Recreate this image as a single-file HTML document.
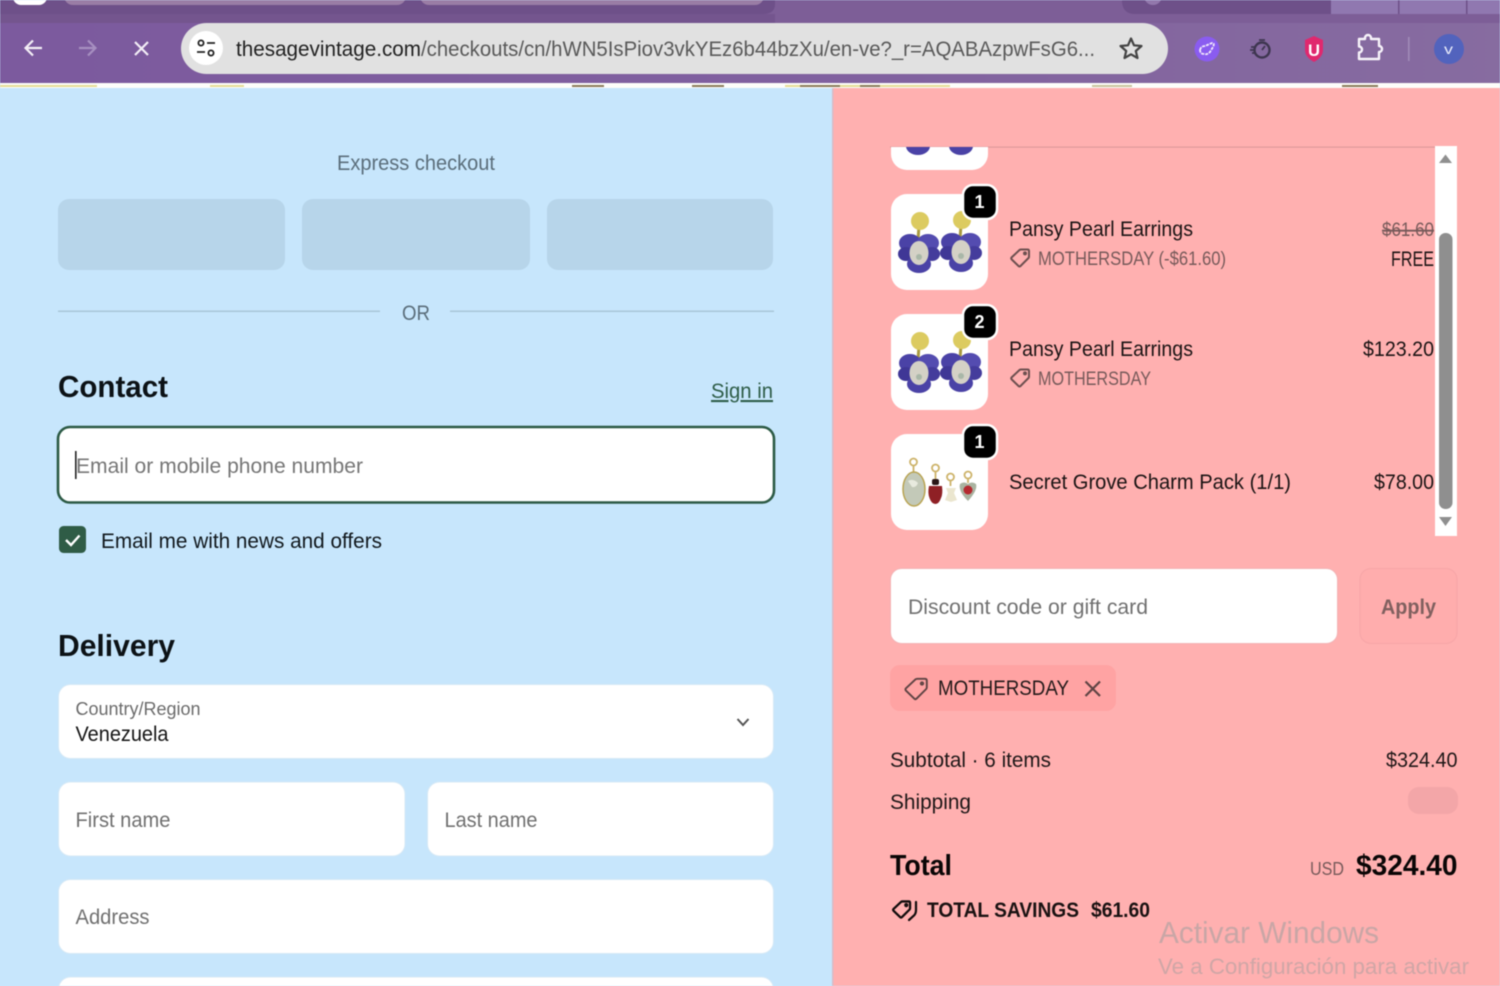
<!DOCTYPE html>
<html><head><meta charset="utf-8"><title>Checkout</title>
<style>
html,body{margin:0;padding:0;width:1500px;height:986px;overflow:hidden;background:#c7e6fc}
svg{display:block;filter:blur(.4px)}
text{font-family:"Liberation Sans",sans-serif;white-space:pre}
</style></head><body>
<svg width="1500" height="986" viewBox="0 0 1500 986" xmlns="http://www.w3.org/2000/svg">
<defs>
<linearGradient id="tb" x1="0" x2="1" y1="0" y2="0"><stop offset="0" stop-color="#7c5a9e"/><stop offset="0.5" stop-color="#80609f"/><stop offset="1" stop-color="#876ca0"/></linearGradient>
<g id="flower">
<path d="M0 -26L-1 -12" stroke="#a99a40" stroke-width="3"/>
<circle cx="1" cy="-31" r="9" fill="#dccb60"/>
<ellipse cx="-9" cy="-9" rx="11" ry="9" fill="#4a42a6"/><ellipse cx="9" cy="-9" rx="11" ry="9" fill="#544cb0"/>
<ellipse cx="-13" cy="2" rx="8" ry="7" fill="#3f3796"/><ellipse cx="13" cy="2" rx="8" ry="7" fill="#443c9c"/>
<ellipse cx="0" cy="12" rx="12" ry="9" fill="#4a42a6"/>
<ellipse cx="0" cy="1" rx="9.500" ry="12" fill="#d4d1c6"/>
<circle cx="0" cy="5" r="3" fill="#a9b7a8"/>
</g>
<g id="tag" fill="none" stroke-linejoin="round" stroke-linecap="round">
<path d="M1.500 9.500Q0.800 10.500 1.800 11.500L8.500 18Q9.500 19 10.500 18L18.500 10Q19 9.500 19 8.500V3Q19 1.500 17.500 1.500H11Q10.200 1.500 9.500 2Z"/><circle cx="15" cy="5.400" r="1"/>
</g>
<clipPath id="topclip"><rect x="880" y="147" width="120" height="30"/></clipPath>
</defs>

<!-- browser chrome -->
<rect x="0" y="0" width="1500" height="24" fill="#7d5e97"/>
<path d="M0 0H775V4Q775 14 763 14H0Z" fill="#6e5089"/>
<path d="M1122 0V2Q1123 14 1135 14H1332V0Z" fill="#6e5089"/>
<rect x="1331" y="0" width="169" height="14" fill="#9078b0"/>
<rect x="1398" y="0" width="1.500" height="14" fill="#6e5089"/><rect x="1466" y="0" width="1.500" height="14" fill="#6e5089"/>
<circle cx="1153" cy="-4" r="9" fill="#9278ac"/>
<rect x="13" y="-12" width="34" height="17" rx="8" fill="#fff"/>
<rect x="64" y="-14" width="342" height="19" rx="9" fill="#9a7da5"/>
<rect x="420" y="-14" width="344" height="19" rx="9" fill="#9a7da5"/>
<rect x="0" y="14" width="1500" height="69" fill="url(#tb)"/>
<rect x="0" y="14" width="1500" height="9" fill="#7d5e97"/>
<rect x="0" y="14" width="775" height="9" fill="#6e5089" opacity="0.6"/>
<path d="M42 48H26M33 40.500L25.500 48L33 55.500" fill="none" stroke="#f3eef6" stroke-width="2.200"/>
<path d="M79 48H95M88 40.500L95.500 48L88 55.500" fill="none" stroke="#a68fc0" stroke-width="2.200"/>
<path d="M135 42L148 55M148 42L135 55" fill="none" stroke="#f3eef6" stroke-width="2.200"/>
<rect x="181" y="23" width="987" height="51" rx="25.500" fill="#e1e1e1"/>
<circle cx="206" cy="48" r="17" fill="#fff"/>
<g fill="none" stroke="#222" stroke-width="1.800"><circle cx="201" cy="43" r="2.600"/><path d="M207 43H215M197 52H205"/><circle cx="211" cy="53" r="2.600"/></g>
<text x="236" y="56" font-size="21" fill="#222" textLength="185" lengthAdjust="spacingAndGlyphs">thesagevintage.com</text>
<text x="421" y="56" font-size="21" fill="#595959" textLength="674" lengthAdjust="spacingAndGlyphs">/checkouts/cn/hWN5IsPiov3vkYEz6b44bzXu/en-ve?_r=AQABAzpwFsG6...</text>
<path d="M1131 38.500L1134 45.300L1141.500 46L1135.800 51L1137.500 58L1131 54.300L1124.500 58L1126.200 51L1120.500 46L1128 45.300Z" fill="none" stroke="#444" stroke-width="2.200" stroke-linejoin="round"/>
<circle cx="1207" cy="49" r="12.500" fill="#8a5cf0"/>
<path d="M1200 50q1 -4 5 -4l7 -3q3 0 1 4l-3 5q-3 3 -6 2q-4 0 -4 -4z" fill="none" stroke="#f3eafc" stroke-width="1.800" stroke-dasharray="3 1"/>
<circle cx="1262" cy="50" r="7.500" fill="none" stroke="#3e3650" stroke-width="2.400"/>
<path d="M1259 40H1265M1262 50L1265 46M1251 47H1255M1250 50H1254M1252 53H1255" stroke="#3e3650" stroke-width="1.800"/>
<path d="M1314 36L1323 40V50Q1323 57 1314 62Q1305 57 1305 50V40Z" fill="#e0286e"/>
<text x="1308" y="56" font-size="17" font-weight="bold" fill="#fff" textLength="12" lengthAdjust="spacingAndGlyphs">U</text>
<path d="M1359 39H1365V38a3 3 0 0 1 6 0V39H1379V46a3 3 0 0 1 0 6V59H1359V52.500a3 3 0 0 0 0 -6Z" fill="none" stroke="#f7f3fa" stroke-width="2.400" stroke-linejoin="round"/>
<rect x="1408" y="37" width="1.600" height="24" fill="#a08bb7"/>
<circle cx="1449" cy="49" r="15" fill="#5263bd"/>
<text x="1444" y="54" font-size="14" fill="#e9ecfb" textLength="9" lengthAdjust="spacingAndGlyphs">v</text>

<!-- page strip -->
<rect x="0" y="83" width="1500" height="5" fill="#fdfdfa"/>
<g fill="#e5dc96"><rect x="0" y="85" width="97" height="2"/><rect x="210" y="85" width="34" height="2"/><rect x="785" y="85" width="165" height="2"/></g>
<g fill="#8a7a5a"><rect x="572" y="85" width="32" height="2"/><rect x="692" y="85" width="32" height="2"/><rect x="800" y="85" width="40" height="2"/><rect x="860" y="85" width="20" height="2"/><rect x="1092" y="85" width="40" height="2" fill="#c9c39c"/><rect x="1342" y="85" width="36" height="2"/></g>

<!-- panels -->
<rect x="0" y="88" width="832" height="898" fill="#c7e6fc"/>
<rect x="832" y="88" width="668" height="898" fill="#ffb0b0"/>
<rect x="832" y="88" width="1.500" height="898" fill="#d7bcc7"/>

<!-- left -->
<text x="337" y="170" font-size="21" fill="#5b6e7b" textLength="158" lengthAdjust="spacingAndGlyphs">Express checkout</text>
<rect x="58" y="199" width="227" height="71" rx="11" fill="#b7d5ea"/>
<rect x="302" y="199" width="228" height="71" rx="11" fill="#b7d5ea"/>
<rect x="547" y="199" width="226" height="71" rx="11" fill="#b7d5ea"/>
<rect x="58" y="310.500" width="322" height="1.500" fill="#a9c6d8"/>
<rect x="450" y="310.500" width="324" height="1.500" fill="#a9c6d8"/>
<text x="402" y="320" font-size="21" fill="#5b6e7b" textLength="28" lengthAdjust="spacingAndGlyphs">OR</text>
<text x="58" y="397" font-size="31" font-weight="bold" fill="#0c1216" textLength="110" lengthAdjust="spacingAndGlyphs">Contact</text>
<text x="711" y="398" font-size="21" fill="#2e5d48" textLength="62" lengthAdjust="spacingAndGlyphs" text-decoration="underline">Sign in</text>
<rect x="58" y="427" width="716" height="75.500" rx="12" fill="#fff" stroke="#2c5a45" stroke-width="2.600"/>
<rect x="75" y="451" width="1.600" height="28" fill="#222"/>
<text x="76" y="473" font-size="21" fill="#767676" textLength="287" lengthAdjust="spacingAndGlyphs">Email or mobile phone number</text>
<rect x="59" y="526" width="27" height="27" rx="4.500" fill="#2f5c46"/>
<path d="M66 540L71 545L79.500 535.500" fill="none" stroke="#fff" stroke-width="2.400"/>
<text x="101" y="548" font-size="21" fill="#11181d" textLength="281" lengthAdjust="spacingAndGlyphs">Email me with news and offers</text>
<text x="58" y="656" font-size="31" font-weight="bold" fill="#0c1216" textLength="117" lengthAdjust="spacingAndGlyphs">Delivery</text>
<g fill="#fff" stroke="#d6e9f6" stroke-width="1">
<rect x="58.500" y="684.500" width="715" height="74" rx="12"/>
<rect x="58.500" y="782" width="346.500" height="74" rx="12"/>
<rect x="427.500" y="782" width="346" height="74" rx="12"/>
<rect x="58.500" y="879.500" width="715" height="74" rx="12"/>
<rect x="58.500" y="977" width="715" height="40" rx="12"/>
</g>
<text x="75.500" y="715" font-size="18" fill="#6b6b6b" textLength="125" lengthAdjust="spacingAndGlyphs">Country/Region</text>
<text x="75.500" y="741" font-size="21" fill="#141414" textLength="93" lengthAdjust="spacingAndGlyphs">Venezuela</text>
<path d="M737.500 719L743 725L748.500 719" fill="none" stroke="#555" stroke-width="2"/>
<text x="75.500" y="827" font-size="21" fill="#707070" textLength="95" lengthAdjust="spacingAndGlyphs">First name</text>
<text x="444.500" y="827" font-size="21" fill="#707070" textLength="93" lengthAdjust="spacingAndGlyphs">Last name</text>
<text x="75.500" y="924" font-size="21" fill="#707070" textLength="74" lengthAdjust="spacingAndGlyphs">Address</text>

<!-- right: items -->
<rect x="890" y="146.500" width="545" height="1.200" fill="#de9a9c"/>
<g clip-path="url(#topclip)">
<rect x="891" y="74" width="97" height="96" rx="16" fill="#fff"/>
<use href="#flower" x="918" y="134"/><use href="#flower" x="961" y="134"/>
</g>
<rect x="891" y="194" width="97" height="96" rx="16" fill="#fff"/>
<use href="#flower" x="919" y="252"/><use href="#flower" x="961" y="251"/>
<rect x="963" y="185" width="34" height="34" rx="10" fill="#000" stroke="#fff" stroke-width="2.500"/>
<text x="974.500" y="208" font-size="18" font-weight="bold" fill="#fff" textLength="10" lengthAdjust="spacingAndGlyphs">1</text>
<rect x="891" y="314" width="97" height="96" rx="16" fill="#fff"/>
<use href="#flower" x="919" y="372"/><use href="#flower" x="961" y="371"/>
<rect x="963" y="305" width="34" height="34" rx="10" fill="#000" stroke="#fff" stroke-width="2.500"/>
<text x="974.500" y="328" font-size="18" font-weight="bold" fill="#fff" textLength="10" lengthAdjust="spacingAndGlyphs">2</text>
<rect x="891" y="434" width="97" height="96" rx="16" fill="#fff"/>
<g>
<g fill="none" stroke="#cdb36a" stroke-width="1.800"><circle cx="913.500" cy="462" r="3.500"/><path d="M913.500 466V472"/><circle cx="935.500" cy="468" r="3.500"/><path d="M935.500 472V480"/><circle cx="950.500" cy="477" r="3.500"/><path d="M950.500 481V486"/><circle cx="968" cy="475" r="3.500"/><path d="M968 479V483"/></g>
<ellipse cx="914" cy="489" rx="11" ry="17" fill="#c3c9b8" stroke="#b9a452" stroke-width="1.500"/>
<path d="M908 481q5 -3 10 2q-2 5 -6 4z" fill="#e8eade"/>
<rect x="932" y="479" width="7" height="6" rx="2" fill="#2a1616"/>
<path d="M929 486h13q1 8 -1 12q-2 6 -5.500 6q-4 0 -6 -6q-2 -5 -0.500 -12z" fill="#8f2025"/>
<path d="M946 488h10l-2 5l3 7l-6 2l-6 -2l3 -7z" fill="#ebe6cf"/>
<path d="M960 484q4 -3 8 0q4 -3 8 0q2 6 -8 17q-10 -10 -8 -17z" fill="#a9b3a0"/><circle cx="968" cy="490" r="4.500" fill="#b52a30"/>
</g>
<rect x="963" y="425" width="34" height="34" rx="10" fill="#000" stroke="#fff" stroke-width="2.500"/>
<text x="974.500" y="448" font-size="18" font-weight="bold" fill="#fff" textLength="10" lengthAdjust="spacingAndGlyphs">1</text>

<text x="1009" y="236" font-size="21" fill="#1b1414" textLength="184" lengthAdjust="spacingAndGlyphs">Pansy Pearl Earrings</text>
<use href="#tag" x="1010" y="248" stroke="#6e5050" stroke-width="2"/>
<text x="1038" y="265" font-size="19" fill="#775a5a" textLength="188" lengthAdjust="spacingAndGlyphs">MOTHERSDAY (-$61.60)</text>
<text x="1382" y="236" font-size="19" fill="#775a5a" textLength="52" lengthAdjust="spacingAndGlyphs" text-decoration="line-through">$61.60</text>
<text x="1391" y="266" font-size="21" fill="#1b1414" textLength="43" lengthAdjust="spacingAndGlyphs">FREE</text>
<text x="1009" y="356" font-size="21" fill="#1b1414" textLength="184" lengthAdjust="spacingAndGlyphs">Pansy Pearl Earrings</text>
<use href="#tag" x="1010" y="368" stroke="#6e5050" stroke-width="2"/>
<text x="1038" y="385" font-size="19" fill="#775a5a" textLength="113" lengthAdjust="spacingAndGlyphs">MOTHERSDAY</text>
<text x="1363" y="356" font-size="21" fill="#1b1414" textLength="71" lengthAdjust="spacingAndGlyphs">$123.20</text>
<text x="1009" y="489" font-size="21" fill="#1b1414" textLength="282" lengthAdjust="spacingAndGlyphs">Secret Grove Charm Pack (1/1)</text>
<text x="1374" y="489" font-size="21" fill="#1b1414" textLength="60" lengthAdjust="spacingAndGlyphs">$78.00</text>

<!-- scrollbar -->
<rect x="1435" y="146" width="22" height="390" fill="#fff"/>
<path d="M1439 163L1445.500 154.500L1452 163Z" fill="#8f8f8f"/>
<rect x="1439" y="233" width="13.500" height="276" rx="6.500" fill="#8f8f8f"/>
<path d="M1439 517H1452L1445.500 526Z" fill="#8f8f8f"/>

<!-- discount -->
<rect x="890.500" y="568.500" width="447" height="75" rx="11" fill="#fff" stroke="#f3b4b6"/>
<text x="908" y="614" font-size="21" fill="#707070" textLength="240" lengthAdjust="spacingAndGlyphs">Discount code or gift card</text>
<rect x="1360" y="568.500" width="97" height="75" rx="11" fill="#ffadad" stroke="#f6a5a7"/>
<text x="1381" y="614" font-size="21" font-weight="bold" fill="#80605f" textLength="55" lengthAdjust="spacingAndGlyphs">Apply</text>
<rect x="890" y="665" width="226" height="46" rx="10" fill="#ffa3a3"/>
<use href="#tag" transform="translate(904 677) scale(1.200)" stroke="#5f4444" stroke-width="1.600"/>
<text x="938" y="695" font-size="21" fill="#241a1a" textLength="131" lengthAdjust="spacingAndGlyphs">MOTHERSDAY</text>
<path d="M1085.500 681.500L1100 696M1100 681.500L1085.500 696" stroke="#5f4444" stroke-width="2.200"/>

<!-- totals -->
<text x="890" y="767" font-size="21" fill="#1f1818" textLength="161" lengthAdjust="spacingAndGlyphs">Subtotal · 6 items</text>
<text x="1386" y="767" font-size="21" fill="#1f1818" textLength="71.500" lengthAdjust="spacingAndGlyphs">$324.40</text>
<text x="890" y="809" font-size="21" fill="#1f1818" textLength="81" lengthAdjust="spacingAndGlyphs">Shipping</text>
<rect x="1408" y="787" width="50" height="27" rx="11" fill="#f3a6a8"/>
<text x="890" y="875" font-size="29" font-weight="bold" fill="#0a0606" textLength="62" lengthAdjust="spacingAndGlyphs">Total</text>
<text x="1310" y="875" font-size="18" fill="#775a5a" textLength="34" lengthAdjust="spacingAndGlyphs">USD</text>
<text x="1356" y="875" font-size="29" font-weight="bold" fill="#0a0606" textLength="101.500" lengthAdjust="spacingAndGlyphs">$324.40</text>
<use href="#tag" transform="translate(892 900) scale(0.950)" stroke="#120c0c" stroke-width="2.400"/>
<path d="M909 920L914 915.500Q916 913.500 916 910V902" fill="none" stroke="#120c0c" stroke-width="2.200" stroke-linecap="round"/>
<text x="927" y="917" font-size="21" font-weight="bold" fill="#1a1212" textLength="152" lengthAdjust="spacingAndGlyphs">TOTAL SAVINGS</text>
<text x="1091" y="917" font-size="21" font-weight="bold" fill="#1a1212" textLength="59" lengthAdjust="spacingAndGlyphs">$61.60</text>

<text x="1159" y="943" font-size="31" fill="#c9a6a6" textLength="220" lengthAdjust="spacingAndGlyphs">Activar Windows</text>
<text x="1158" y="974" font-size="22" fill="#cfa6a6" textLength="311" lengthAdjust="spacingAndGlyphs">Ve a Configuración para activar</text>
</svg>
</body></html>
